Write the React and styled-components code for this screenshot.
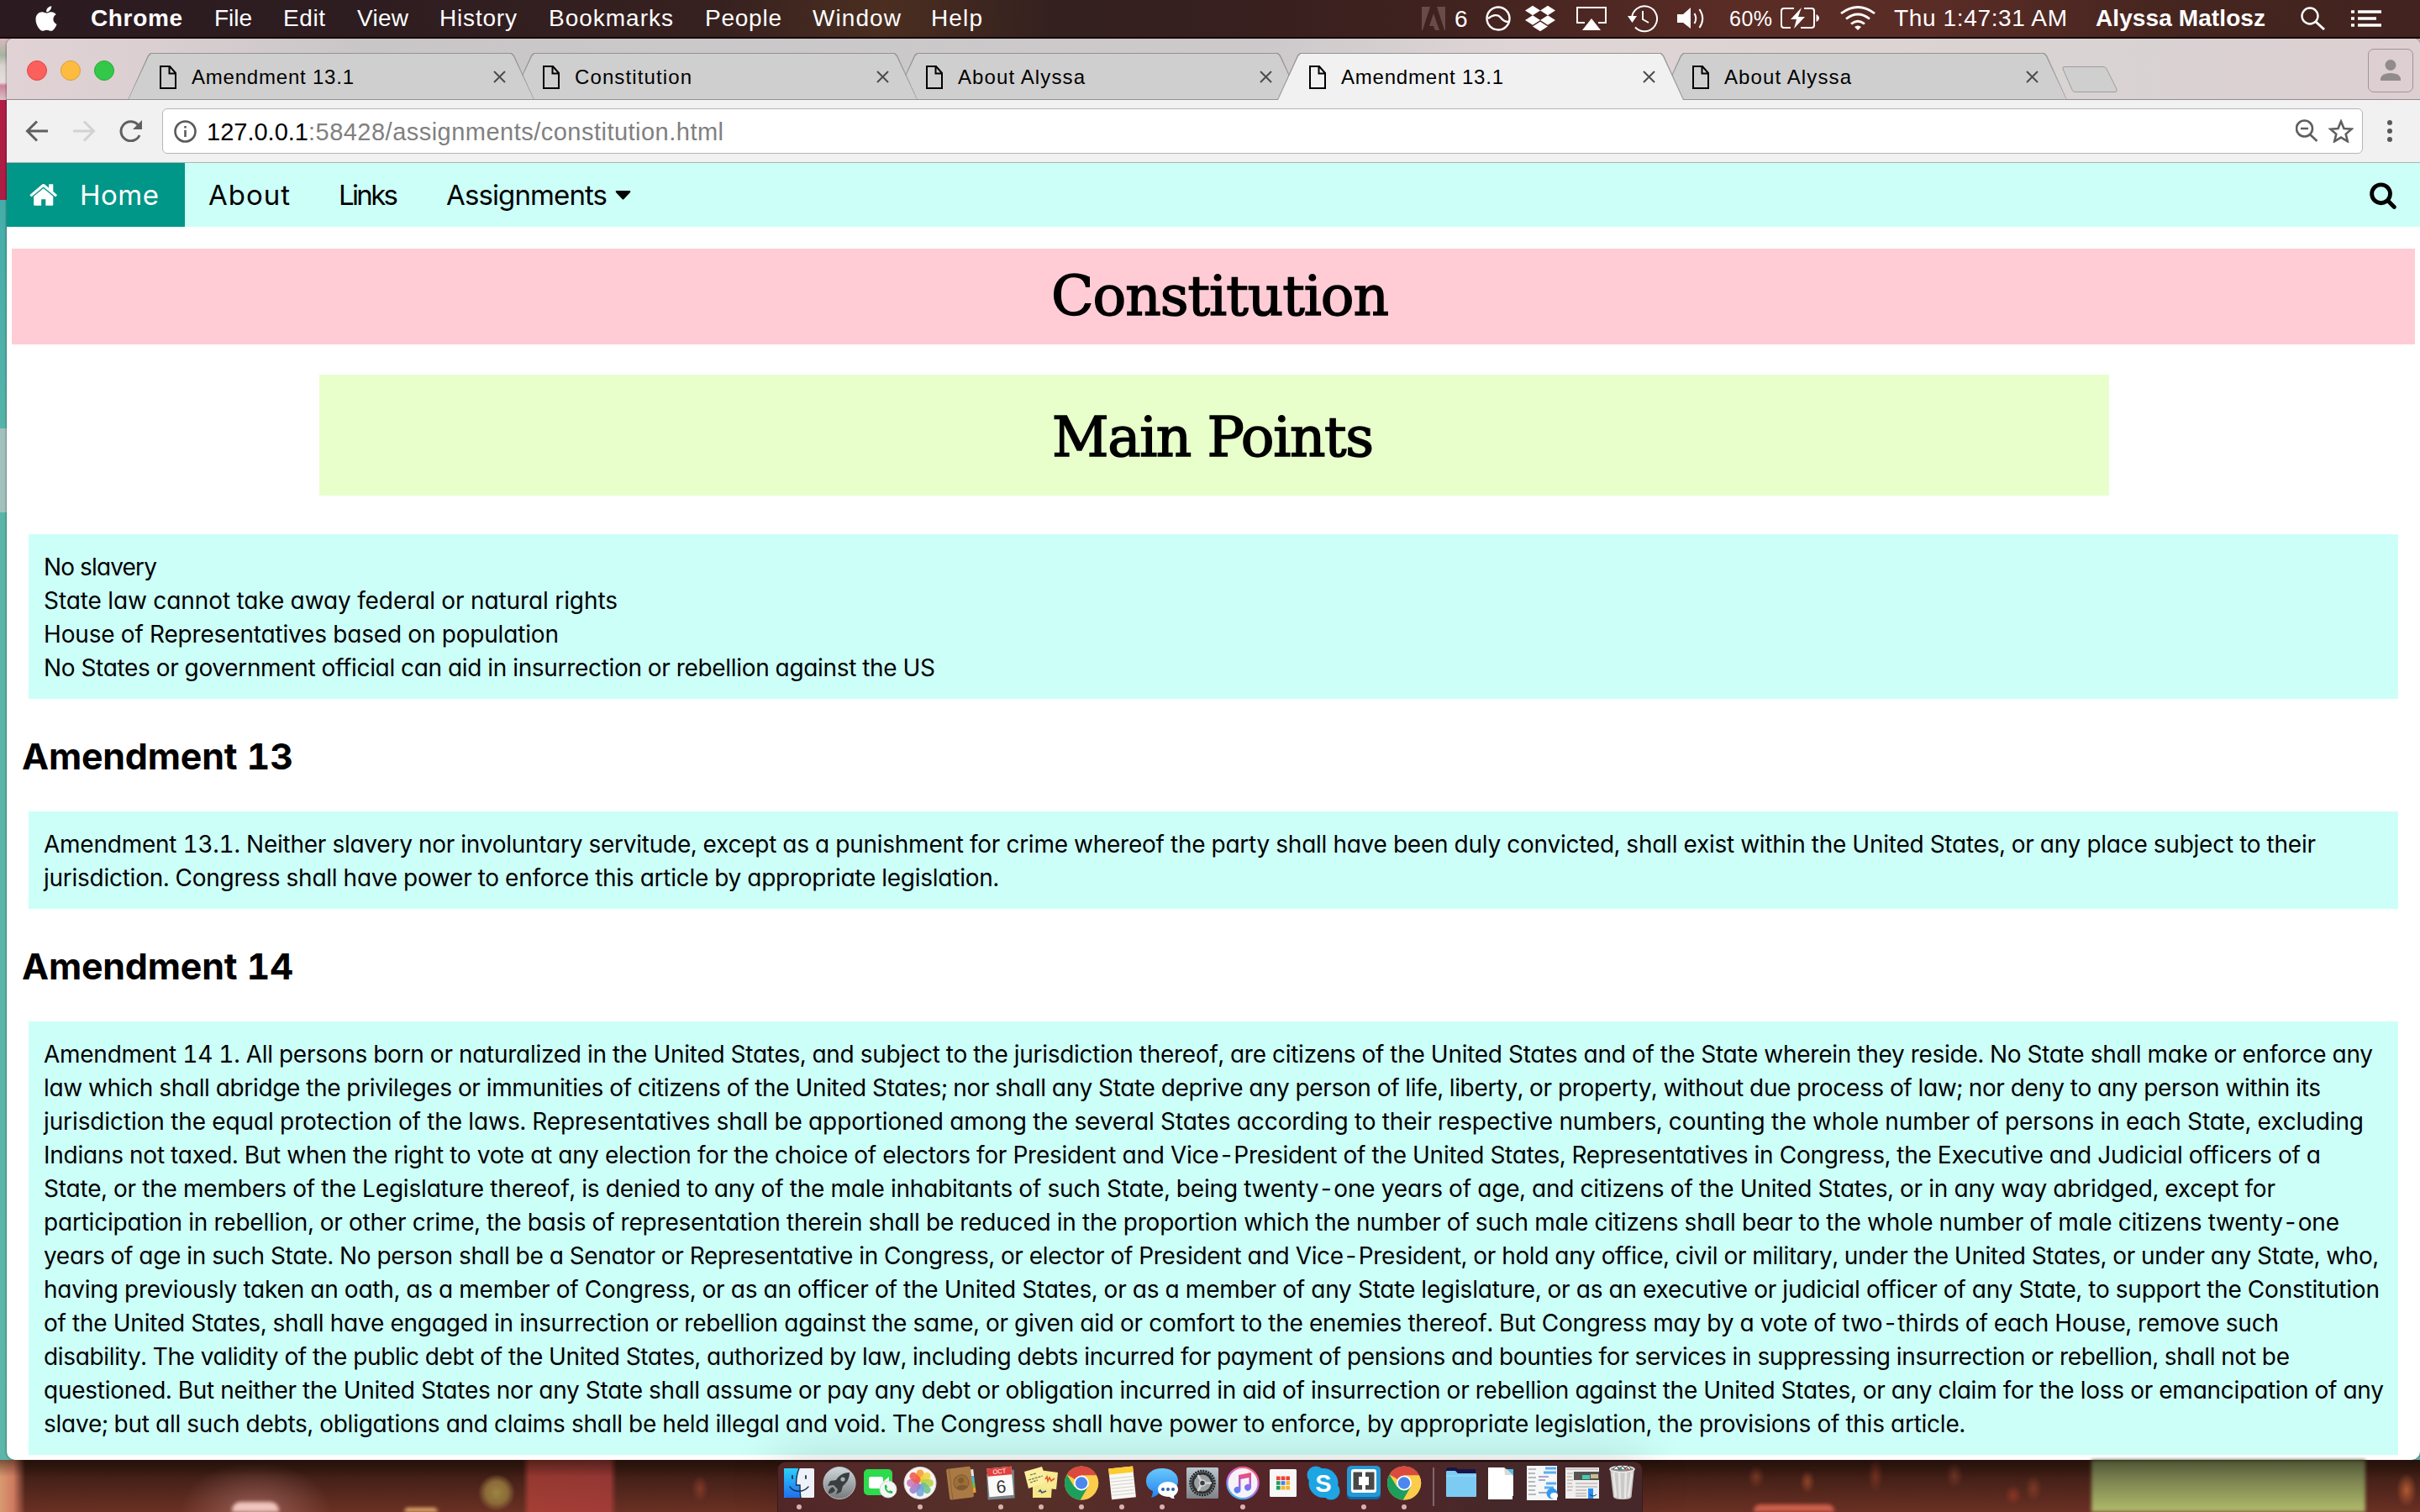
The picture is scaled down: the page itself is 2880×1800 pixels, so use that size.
import React, { useLayoutEffect, useRef, useState } from "react";
import styled, { createGlobalStyle } from "styled-components";
import { FaApple, FaDropbox } from "react-icons/fa";

const sans = `"Liberation Sans", Arial, sans-serif`;
const gothic = `Inter, "Open Sans", sans-serif`;
const slab = `"DejaVu Serif", serif`;

const GlobalStyle = createGlobalStyle`
  * { box-sizing: border-box; }
  body { margin: 0; background: #3a1d15; }
  svg { display: block; flex: none; }
`;

/* ---------- text set to a measured width ---------- */

const FitBox = styled.span`
  display: block;
  flex: none;
  width: ${(p) => p.$w}px;
  white-space: pre;
`;

function Fit({ w, children }) {
  const ref = useRef(null);
  const [spacing, setSpacing] = useState(0);
  useLayoutEffect(() => {
    const natural = ref.current.getBoundingClientRect().width;
    setSpacing((w - natural) / (children.length - 1 || 1));
  }, []);
  return (
    <FitBox $w={w}>
      <span ref={ref} style={{ letterSpacing: spacing }}>{children}</span>
    </FitBox>
  );
}

/* ---------- desktop ---------- */

const Desktop = styled.div`
  width: 2880px;
  height: 1800px;
  overflow: hidden;
  display: flex;
  flex-direction: column;
  background: #2a1512;
  font-family: ${sans};
`;

const MenuBar = styled.header`
  flex: none;
  height: 46px;
  padding: 0 46px 0 42px;
  display: flex;
  align-items: center;
  color: #fff;
  font-size: 28px;
  line-height: 32px;
  border-bottom: 2px solid #1a0a0a;
  background: linear-gradient(90deg, #2b1b20 0, #2d1c20 400px, #37211f 860px, #4b2e20 1050px,
    #33201f 1260px, #38201f 1500px, #40221f 1720px, #5a2c26 2060px, #5a2c26 2300px, #45251f 2600px, #42231f 2880px);
`;

const Menu = styled.div`
  display: flex;
  margin-left: ${(p) => p.$gap}px;
  font-weight: ${(p) => (p.$bold ? 700 : 400)};
  font-size: ${(p) => p.$size || 28}px;
  padding-top: ${(p) => p.$drop || 0}px;
`;

const StatusArea = styled.div`
  margin-left: auto;
  display: flex;
  align-items: center;
`;

const StatusIcon = styled.div`
  flex: none;
  width: ${(p) => p.$w}px;
  margin-left: ${(p) => p.$gap}px;
  display: flex;
  justify-content: center;
`;

const Workspace = styled.div`
  flex: none;
  height: 1692px;
  display: flex;
  background: linear-gradient(180deg, #d9b9bf 0, #a7b3a0 20px, #d8d4d2 32px, #e6dede 52px, #cf8298 56px, #d9c4c8 73px,
    #b01e45 73px, #ad1c44 192px, #45ada9 192px, #55b3a9 464px, #a3c1bc 464px, #a3c1bc 564px, #59b5a8 564px, #5cb6aa 100%);
`;

const Window = styled.main`
  margin-left: 8px;
  width: 2872px;
  display: flex;
  flex-direction: column;
  background: #fff;
  border-radius: 8px 8px 10px 10px;
  overflow: hidden;
  box-shadow: 0 0 3px rgba(0, 0, 0, 0.6);
`;

/* ---------- tab strip ---------- */

const TabStrip = styled.div`
  flex: none;
  height: 73px;
  padding: 17px 8px 0 36px;
  position: relative;
  display: flex;
  align-items: flex-start;
  background: linear-gradient(90deg, #e0d2d5 0, #ddd0d3 130px, #c9c6c7 420px, #cbc8c9 900px, #cdc9ca 1500px,
    #dfd5d6 1800px, #ddd3d2 2150px, #d9d3d3 2500px, #decfd1 2872px);
  box-shadow: inset 0 -1px 0 #908c8d;
`;

const Lights = styled.div`
  flex: none;
  display: flex;
  gap: 16px;
  width: 108px;
  padding-top: 9px;
  margin-left: -12px;
  margin-right: 12px;
`;

const Light = styled.span`
  width: 24px;
  height: 24px;
  border-radius: 50%;
  background: ${(p) => p.$fill};
  border: 1px solid ${(p) => p.$edge};
`;

const Tab = styled.div`
  flex: none;
  position: relative;
  z-index: ${(p) => p.$z};
  width: 484px;
  height: 56px;
  margin-right: -28px;
  padding: 1px 34px 0 38px;
  display: flex;
  align-items: center;
  font-size: 24px;
  color: #000;
  background: #949293;
  clip-path: polygon(0 100%, 24px 3px, 27px 0, calc(100% - 27px) 0, calc(100% - 24px) 3px, 100% 100%);
  &::before {
    content: "";
    position: absolute;
    z-index: -1;
    inset: 1px 1px ${(p) => (p.$active ? 0 : 1)}px 1px;
    background: ${(p) => (p.$active ? "#f1f1f1" : "#cfcfcf")};
    clip-path: polygon(0 100%, 24px 3px, 27px 0, calc(100% - 27px) 0, calc(100% - 24px) 3px, 100% 100%);
  }
  svg:last-child { margin-left: auto; }
`;

const TabTitle = styled.div`
  margin-left: 18px;
`;

const NewTab = styled.div`
  flex: none;
  width: 66px;
  height: 31px;
  margin: 16px 0 0 22px;
`;

const Profile = styled.div`
  flex: none;
  margin: -5px 0 0 auto;
  width: 54px;
  height: 52px;
  border: 1px solid #9c9596;
  border-radius: 7px;
  display: flex;
  align-items: center;
  justify-content: center;
`;

/* ---------- toolbar ---------- */

const Toolbar = styled.div`
  flex: none;
  height: 75px;
  padding: 0 29px 0 22px;
  display: flex;
  align-items: center;
  background: #f1f1f1;
  border-bottom: 1px solid #b3b3b3;
`;

const NavButtons = styled.div`
  flex: none;
  width: 163px;
  display: flex;
  gap: 28px;
`;

const Omnibox = styled.div`
  width: 2619px;
  height: 54px;
  margin-right: 28px;
  padding: 0 10px 0 13px;
  display: flex;
  align-items: center;
  background: #fff;
  border: 1px solid #b5b5b5;
  border-radius: 6px;
  font-size: 29px;
`;

const Url = styled.div`
  margin: 2px auto 0 12px;
  display: flex;
  color: ${(p) => p.$color};
`;

const UrlPath = styled.div`
  color: #808080;
`;

/* ---------- page ---------- */

const NavBar = styled.nav`
  flex: none;
  height: 76px;
  padding-right: 27px;
  display: flex;
  align-items: center;
  justify-content: space-between;
  background: #ccfff8;
  font-family: ${gothic};
  font-feature-settings: "cv11", "ss03";
  font-size: 33px;
`;

const NavLinks = styled.div`
  height: 100%;
  display: flex;
`;

const NavLink = styled.a`
  height: 100%;
  display: flex;
  align-items: center;
  padding: 0 ${(p) => p.$right}px 0 ${(p) => p.$left}px;
  gap: ${(p) => p.$gap || 0}px;
  color: ${(p) => (p.$active ? "#fff" : "#000")};
  background: ${(p) => (p.$active ? "#009688" : "transparent")};
`;

const Banner = styled.h1`
  flex: none;
  margin: ${(p) => p.$margin};
  width: ${(p) => p.$w}px;
  height: ${(p) => p.$h}px;
  padding: ${(p) => p.$drop}px 0 0 ${(p) => p.$indent}px;
  display: flex;
  align-items: center;
  background: ${(p) => p.$fill};
  font: 400 66px/80px ${slab};
  -webkit-text-stroke: 1.6px #000;
`;

const Panel = styled.section`
  flex: none;
  margin: 0 26px;
  padding: 19px 17px 17px 18px;
  background: #ccfff8;
  font: 400 28px/40px ${gothic};
  font-feature-settings: "cv11", "ss03", "tnum";
`;

const Heading = styled.h2`
  flex: none;
  height: 134px;
  margin: 0;
  padding: 2px 0 0 18px;
  display: flex;
  align-items: center;
  font: 700 43px/50px ${gothic};
  font-feature-settings: "cv11", "ss03", "tnum";
`;

/* ---------- dock ---------- */

const DockArea = styled.footer`
  flex: none;
  position: relative;
  height: 62px;
  padding: 2px 0 0 925px;
  background:
    linear-gradient(180deg, rgba(30, 14, 8, 0.5) 0, transparent 20px),
    linear-gradient(90deg, #d89a70 0, #cf7a60 16px, transparent 30px),
    radial-gradient(90px 60px at 304px 62px, rgba(190, 130, 125, 0.55), transparent),
    radial-gradient(22px 22px at 591px 39px, #9a8442 0, #8b6a38 60%, transparent 100%),
    linear-gradient(90deg, transparent 622px, rgba(200, 72, 64, 0.62) 630px, rgba(190, 66, 66, 0.66) 726px, transparent 734px),
    radial-gradient(10px 16px at 833px 34px, rgba(160, 70, 50, 0.6), transparent),
    radial-gradient(10px 14px at 2090px 20px, rgba(150, 70, 45, 0.6), transparent),
    radial-gradient(9px 14px at 2151px 26px, rgba(170, 80, 45, 0.7), transparent),
    radial-gradient(9px 22px at 2232px 18px, rgba(150, 60, 40, 0.6), transparent),
    radial-gradient(10px 16px at 2326px 18px, rgba(140, 65, 50, 0.6), transparent),
    radial-gradient(10px 16px at 2420px 34px, rgba(150, 70, 45, 0.6), transparent),
    radial-gradient(10px 12px at 2396px 42px, rgba(170, 60, 40, 0.6), transparent),
    radial-gradient(12px 20px at 2864px 36px, rgba(200, 100, 55, 0.8), transparent),
    linear-gradient(180deg, #2b140d 0, #4b231a 45%, #6b3024 100%);
`;

const Glow = styled.div`
  position: absolute;
  left: ${(p) => p.$x}px;
  bottom: 0;
  width: ${(p) => p.$w}px;
  height: ${(p) => p.$h}px;
  border-radius: ${(p) => p.$round || 0}px ${(p) => p.$round || 0}px 0 0;
  background: ${(p) => p.$fill};
  filter: blur(2px);
`;

const Dock = styled.div`
  position: relative;
  width: 1030px;
  height: 64px;
  padding-left: 1px;
  display: flex;
  border-radius: 10px 10px 0 0;
  border: 1px solid #38191a;
  background: linear-gradient(90deg, #512628 0, #573129 270px, #542629 520px, #542629 700px, #452829 860px, #47282a 1030px);
  box-shadow: 0 -4px 60px rgba(0, 0, 0, 0.16);
`;

const DockItem = styled.div`
  flex: none;
  width: 48px;
  height: 60px;
  display: flex;
  flex-direction: column;
  align-items: center;
  &::after {
    content: "";
    width: 6px;
    height: 6px;
    border-radius: 50%;
    background: ${(p) => (p.$running ? "#d9b0b0" : "transparent")};
  }
`;

const DockDivider = styled.div`
  flex: none;
  width: 2px;
  height: 46px;
  margin: 6px 8px 0 10px;
  background: #83666a;
`;

/* ---------- small drawings ---------- */

const PageIcon = () => (
  <svg width="20" height="28" viewBox="0 0 20 28" fill="none" stroke="#000" strokeWidth="2">
    <path d="M1 1H12L19 9V27H1Z M11.5 1V9.5H19" />
  </svg>
);
const CloseIcon = () => (
  <svg width="15" height="15" viewBox="0 0 15 15" stroke="#4c4c4c" strokeWidth="2">
    <path d="M1 1L14 14M14 1L1 14" />
  </svg>
);

/* ---------- dock drawings, each in a 48 x 50 cell ---------- */

const Cell = ({ children }) => <svg width="48" height="50" viewBox="0 0 48 50">{children}</svg>;

const Finder = () => (
  <Cell>
    <defs><linearGradient id="fin" x2="0" y2="1"><stop stopColor="#2bd0fb" /><stop offset="1" stopColor="#1f6ff0" /></linearGradient></defs>
    <rect x="6" y="7" width="36" height="35" rx="1.5" fill="#eef2f8" />
    <path d="M7.500 7H24C21 14 20.500 20 20.500 27H25C25 33 25 37 26 42H7.500Q6 42 6 40.500V8.500Q6 7 7.500 7Z" fill="url(#fin)" />
    <path d="M24 7C21 14 20.500 20 20.500 27H25C25 33 25 37 26 42M13 29C18 36 29 36 35 29" fill="none" stroke="#16324f" strokeWidth="1.4" strokeLinecap="round" />
    <path d="M16 16V19M32 16V19" stroke="#16324f" strokeWidth="1.8" strokeLinecap="round" />
  </Cell>
);
const Rocket = () => (
  <Cell>
    <defs><linearGradient id="rk" x2="0" y2="1"><stop stopColor="#cfd8dc" /><stop offset="1" stopColor="#76797b" /></linearGradient></defs>
    <circle cx="24" cy="24.500" r="19" fill="url(#rk)" stroke="#bcc4c8" />
    <path d="M36 12C28 12 23 16 20 21L13 22L10 28L17 27L22 32L20 38L26 35L28 28C33 24 36 19 36 12Z" fill="#3b3e41" />
    <circle cx="28" cy="20" r="2.600" fill="#a7afb3" />
    <path d="M16 29C12 31 11 34 11 37C14 37 17 36 19 33Z" fill="#3b3e41" />
  </Cell>
);
const FaceTime = () => (
  <Cell>
    <rect x="5" y="8" width="34" height="31" rx="5" fill="#2ddb4c" />
    <rect x="11" y="17" width="17" height="14" rx="2.500" fill="#fff" />
    <path d="M28 23L35 17V31L28 26Z" fill="#fff" />
    <circle cx="34" cy="32" r="10" fill="#f4f5f5" stroke="#cfd6d2" />
    <path d="M30 27C29 33 33 37 39 37L39.500 34.500L36.500 33.300L35 34.300C33.500 33.500 32.500 32.500 32 31L33 29.500L31.800 26.600Z" fill="#22bf4a" />
  </Cell>
);
const Photos = () => (
  <Cell>
    <circle cx="24" cy="24.500" r="19" fill="#f6f4f3" stroke="#d6cfcc" />
    {["#f79a2f", "#f1d43a", "#b5d14c", "#6cc08b", "#6fa7dd", "#9a82cf", "#c978b8", "#ef5a4c"].map((c, i) => (
      <rect key={c} x="19.500" y="8.500" width="9" height="15" rx="4.500" fill={c} opacity="0.88" transform={`rotate(${i * 45} 24 24.500)`} />
    ))}
  </Cell>
);
const Contacts = () => (
  <Cell>
    <g transform="rotate(-7 24 24)">
      <path d="M36 10H41V18H36Z" fill="#e8e8e8" /><path d="M36 18H41V25H36Z" fill="#4ab6d6" />
      <path d="M36 25H41V32H36Z" fill="#6cbf4a" /><path d="M36 32H41V38H36Z" fill="#f0a12e" />
      <rect x="9" y="6" width="29" height="37" rx="2" fill="#a97a45" />
      <path d="M12.500 6V43" stroke="#8c6232" />
      <circle cx="25" cy="24" r="9" fill="#9d6f3b" stroke="#80592c" />
      <circle cx="25" cy="21.500" r="3.500" fill="#80592c" /><path d="M18.500 30C20 26 30 26 31.500 30C28 33 22 33 18.500 30Z" fill="#80592c" />
    </g>
  </Cell>
);
const DayLabel = styled.text`
  font-family: ${sans};
  text-anchor: middle;
`;
const Calendar = () => (
  <Cell>
    <g transform="rotate(-5 24 24)">
      <path d="M8 12L7 43L39 44L41 10Z" fill="#77828c" />
      <rect x="9" y="6" width="29" height="34" fill="#fafafa" />
      <rect x="9" y="6" width="29" height="9.500" fill="#e2403c" />
      <DayLabel x="23.500" y="13.300" fontSize="7.500" fill="#fff">OCT</DayLabel>
      <DayLabel x="24" y="36" fontSize="21" fill="#333">6</DayLabel>
    </g>
  </Cell>
);
const Stickies = () => (
  <Cell>
    <path d="M14 24L37 26L36 42L14 42Z" fill="#f5e688" />
    <path d="M22 9L44 12L42 32L22 30Z" fill="#f7ea90" />
    <path d="M4 11L25 5L31 23L9 31Z" fill="#fbf0a0" />
    <path d="M11 15L18 13M9 21L26 16M11 24L20 21" stroke="#77704a" strokeWidth="1.3" strokeDasharray="3 1" />
    <path d="M29 20L31 17L32 22L34 18L36 22L40 19" stroke="#e2552f" strokeWidth="1.6" fill="none" />
    <path d="M21 35L23 33L25 36L30 34" stroke="#34507c" strokeWidth="1.6" fill="none" />
  </Cell>
);
const ChromeLogo = () => (
  <Cell>
    <circle cx="24" cy="24.500" r="20" fill="#fbcd4b" />
    <path d="M24 24.500L6.700 14.500A20 20 0 0 1 42 15.500H24Z" fill="#db4a3f" />
    <path d="M6.700 14.500A20 20 0 0 0 23 44.500L32 29L24 24.500L15.500 29Z" fill="#1c9f5c" />
    <path d="M24 15.500H42A20 20 0 0 1 23 44.500L32 29Z" fill="#fbcd4b" />
    <circle cx="24" cy="24.500" r="9" fill="#fff" /><circle cx="24" cy="24.500" r="7.200" fill="#4c87ee" />
  </Cell>
);
const Notes = () => (
  <Cell>
    <g transform="rotate(-6 24 24)">
      <rect x="10" y="6" width="29" height="37" fill="#f9f8f4" /><rect x="10" y="6" width="29" height="7" fill="#fccb2f" />
      <path d="M11 18H38M11 22H38M11 26H38M11 30H38M11 34H38M11 38H38" stroke="#d4d2cb" />
    </g>
  </Cell>
);
const Messages = () => (
  <Cell>
    <defs><linearGradient id="ms" x2="0" y2="1"><stop stopColor="#6bc8fb" /><stop offset="1" stopColor="#2084ef" /></linearGradient></defs>
    <path d="M24 7C13 7 5 13 5 22C5 28 8 32 13 34C13 37 12 40 11 42C15 41 18 39 20 37C34 38 43 32 43 22C43 13 35 7 24 7Z" fill="url(#ms)" />
    <path d="M31 23C24 23 19 27 19 32C19 38 25 41 33 41C35 43 37 43 39 43C38 42 38 41 38 40C41 38 43 35 43 32C43 27 38 23 31 23Z" fill="#fff" />
    <g fill="#2b5fae"><circle cx="25" cy="32" r="2" /><circle cx="31" cy="32" r="2" /><circle cx="37" cy="32" r="2" /></g>
  </Cell>
);
const Settings = () => (
  <Cell>
    <defs><linearGradient id="st" x2="0" y2="1"><stop stopColor="#b9c7cf" /><stop offset="1" stopColor="#7d8488" /></linearGradient></defs>
    <rect x="5" y="6" width="38" height="37" rx="1.500" fill="url(#st)" />
    <circle cx="24" cy="24.500" r="14.500" fill="#8f9496" stroke="#242628" strokeWidth="2.500" strokeDasharray="2 1.100" />
    <circle cx="24" cy="24.500" r="11.500" fill="#9b9fa1" stroke="#2f3133" strokeWidth="3" />
    <path d="M24 24.500H35M24 24.500L18.500 15M24 24.500L18.500 34" stroke="#d3d6d8" strokeWidth="2.600" />
    <circle cx="24" cy="24.500" r="3.500" fill="#3a3c3e" stroke="#d3d6d8" strokeWidth="1.500" />
  </Cell>
);
const ITunes = () => (
  <Cell>
    <defs>
      <linearGradient id="itr" x1="0.800" x2="0.300" y2="1"><stop stopColor="#fa5a6c" /><stop offset="0.500" stopColor="#c769e6" /><stop offset="1" stopColor="#3fb4f7" /></linearGradient>
      <linearGradient id="itn" x2="0" y2="1"><stop stopColor="#fb4b63" /><stop offset="0.550" stopColor="#a95fe6" /><stop offset="1" stopColor="#3d8bf4" /></linearGradient>
    </defs>
    <circle cx="24" cy="24.500" r="18.600" fill="#f5f3f9" stroke="url(#itr)" strokeWidth="2.200" />
    <path d="M19 15L34 12V29.500A4 4 0 1 1 31.500 26V18L21.500 20V32.500A4 4 0 1 1 19 29Z" fill="url(#itn)" />
  </Cell>
);
const AppGrid = () => (
  <Cell>
    <rect x="8" y="8" width="32" height="33" rx="1.500" fill="#f7f7f7" />
    {["#ee4035", "#ee4035", "#ee4035", "#17a05e", "#3d7ff0", "#f7b529", "#17a05e", "#f7b529", "#f7b529"].map((c, i) => (
      <rect key={i} x={16 + (i % 3) * 5.700} y={16.500 + Math.floor(i / 3) * 5.700} width="4.600" height="4.600" fill={c} />
    ))}
  </Cell>
);
const SkypeLetter = styled.text`
  font: 700 29px ${sans};
  text-anchor: middle;
`;
const Skype = () => (
  <Cell>
    <g fill="#1ea5e3"><circle cx="24" cy="24.500" r="17.500" /><circle cx="15" cy="15" r="10.500" /><circle cx="33" cy="34" r="10.500" /></g>
    <SkypeLetter x="24" y="35" fill="#fff">S</SkypeLetter>
  </Cell>
);
const Brackets = () => (
  <Cell>
    <rect x="4" y="5" width="40" height="39" rx="5" fill="#0d68a8" /><rect x="4" y="4" width="40" height="37" rx="5" fill="#2398d4" />
    <rect x="9" y="8" width="30" height="28" rx="3" fill="#fff" />
    <path d="M11.500 11.500H22V17H18V27H22V32.500H11.500ZM36.500 11.500H26V17H30V27H26V32.500H36.500Z" fill="#484848" />
  </Cell>
);
const Folder = () => (
  <Cell>
    <path d="M6 8L8 6H18L20 8H41V16H6Z" fill="#171447" />
    <path d="M6 11Q6 10 7 10H17L20 13H41Q42 13 42 14V40Q42 41 41 41H7Q6 41 6 40Z" fill="#7ccbf3" />
    <path d="M6 16H42" stroke="#a2ddf8" />
  </Cell>
);
const Documents = () => (
  <Cell>
    <path d="M20 8H38V40H20Z" fill="#e8ecee" /><path d="M30 8H38V16Z" fill="#54bde6" />
    <path d="M8 6H27L37 15V44H8Z" fill="#fff" /><path d="M27 6L28 15H37Z" fill="#d8dada" />
  </Cell>
);
const MessageWindow = () => (
  <Cell>
    <rect x="6" y="4" width="36" height="41" fill="#f6f7f7" />
    <path d="M8 8H17M8 13H16M8 18H17M8 23H16M8 28H17M8 33H16M8 38H17" stroke="#a4a7a9" strokeWidth="1.600" />
    <path d="M28 7H41M26 12H41M29 25H41M27 30H38" stroke="#58adf3" strokeWidth="3" />
    <path d="M20 17H32M20 21H28M20 36H30" stroke="#8b8bc9" strokeWidth="1.600" />
    <circle cx="36" cy="37" r="6.500" fill="#2f9af3" /><ellipse cx="38.500" cy="39.500" rx="4.500" ry="3.500" fill="#fff" />
  </Cell>
);
const FinderWindow = () => (
  <Cell>
    <rect x="4" y="6" width="40" height="37" fill="#f1efee" />
    <path d="M5 8H43M6 13H13M6 17H12M6 21H13M6 25H12M6 29H13M6 33H12" stroke="#c3bdb8" strokeWidth="1.500" />
    <rect x="14" y="11" width="30" height="10" fill="#565452" /><rect x="24" y="15" width="9" height="5" fill="#43cbb5" /><rect x="34" y="14" width="9" height="5" fill="#cbbd92" />
    <path d="M16 25H42M16 29H42M16 33H29M16 37H29M16 40H29" stroke="#bcbcbc" strokeWidth="1.300" />
    <rect x="31" y="31" width="12" height="12" fill="#eaf1f8" /><rect x="31" y="31" width="6" height="12" fill="#2491f3" />
    <path d="M33 38Q37 42 41 38" fill="none" stroke="#1d3550" />
  </Cell>
);
const Trash = () => (
  <Cell>
    <path d="M9 7L38 7L34.500 41Q34 44 24 44Q14 44 13 41Z" fill="#cccac8" />
    <path d="M13 12L16 41M20 12L21 43M28 12L27 43M35 12L31 41" stroke="#e8e7e6" strokeWidth="2.500" />
    <ellipse cx="23.500" cy="8" rx="14.500" ry="3.600" fill="#8d8b89" stroke="#eeedec" strokeWidth="1.500" />
    <path d="M13 8L17 4L20 9L24 4L27 8L31 4L34 8" fill="#f4f4f4" stroke="#4a4644" strokeWidth="1" />
    <circle cx="22" cy="8" r="1.500" fill="#2e9a8c" /><circle cx="30" cy="8" r="1.300" fill="#b94a3a" />
  </Cell>
);

/* ---------- data ---------- */

const menus = [
  ["Chrome", 109, 41, true], ["File", 45, 38], ["Edit", 50, 37], ["View", 61, 38], ["History", 92, 37],
  ["Bookmarks", 148, 38], ["People", 91, 38], ["Window", 105, 37], ["Help", 61, 36],
];

const tabs = [
  ["Amendment 13.1", 193], ["Constitution", 139], ["About Alyssa", 151], ["Amendment 13.1", 193], ["About Alyssa", 151],
];

const points = [
  ["No slavery", 135],
  ["State law cannot take away federal or natural rights", 683],
  ["House of Representatives based on population", 613],
  ["No States or government official can aid in insurrection or rebellion against the US", 1061],
];

const amendment13 = [
  ["Amendment 13.1. Neither slavery nor involuntary servitude, except as a punishment for crime whereof the party shall have been duly convicted, shall exist within the United States, or any place subject to their", 2704],
  ["jurisdiction. Congress shall have power to enforce this article by appropriate legislation.", 1137],
];

const amendment14 = [
  ["Amendment 14 1. All persons born or naturalized in the United States, and subject to the jurisdiction thereof, are citizens of the United States and of the State wherein they reside. No State shall make or enforce any", 2772],
  ["law which shall abridge the privileges or immunities of citizens of the United States; nor shall any State deprive any person of life, liberty, or property, without due process of law; nor deny to any person within its", 2710],
  ["jurisdiction the equal protection of the laws. Representatives shall be apportioned among the several States according to their respective numbers, counting the whole number of persons in each State, excluding", 2761],
  ["Indians not taxed. But when the right to vote at any election for the choice of electors for President and Vice-President of the United States, Representatives in Congress, the Executive and Judicial officers of a", 2710],
  ["State, or the members of the Legislature thereof, is denied to any of the male inhabitants of such State, being twenty-one years of age, and citizens of the United States, or in any way abridged, except for", 2656],
  ["participation in rebellion, or other crime, the basis of representation therein shall be reduced in the proportion which the number of such male citizens shall bear to the whole number of male citizens twenty-one", 2732],
  ["years of age in such State. No person shall be a Senator or Representative in Congress, or elector of President and Vice-President, or hold any office, civil or military, under the United States, or under any State, who,", 2779],
  ["having previously taken an oath, as a member of Congress, or as an officer of the United States, or as a member of any State legislature, or as an executive or judicial officer of any State, to support the Constitution", 2780],
  ["of the United States, shall have engaged in insurrection or rebellion against the same, or given aid or comfort to the enemies thereof. But Congress may by a vote of two-thirds of each House, remove such", 2660],
  ["disability. The validity of the public debt of the United States, authorized by law, including debts incurred for payment of pensions and bounties for services in suppressing insurrection or rebellion, shall not be", 2673],
  ["questioned. But neither the United States nor any State shall assume or pay any debt or obligation incurred in aid of insurrection or rebellion against the United States, or any claim for the loss or emancipation of any", 2785],
  ["slave; but all such debts, obligations and claims shall be held illegal and void. The Congress shall have power to enforce, by appropriate legislation, the provisions of this article.", 2287],
];

const apps = [
  [Finder, true], [Rocket], [FaceTime], [Photos, true], [Contacts], [Calendar, true], [Stickies, true], [ChromeLogo, true],
  [Notes, true], [Messages, true], [Settings], [ITunes, true], [AppGrid], [Skype], [Brackets, true], [ChromeLogo, true],
];
const shelf = [Folder, Documents, MessageWindow, FinderWindow, Trash];

const Lines = ({ rows }) => (
  <Panel>{rows.map(([t, w]) => <Fit key={t} w={w}>{t}</Fit>)}</Panel>
);

function Status() {
  return (
    <StatusArea>
      <StatusIcon $w={28} $gap={0}>
        <svg width="28" height="28" viewBox="0 0 28 28" fill="#674c4a"><path d="M0 0H10L1 28H0ZM18 0H28V28H27ZM14 8L21 28H16L14 23H9Z" /></svg>
      </StatusIcon>
      <Menu $gap={11} $drop={2}><Fit w={15}>6</Fit></Menu>
      <StatusIcon $w={30} $gap={22}>
        <svg width="30" height="30" viewBox="0 0 30 30" fill="none" stroke="#fff" strokeWidth="2.400"><circle cx="15" cy="15" r="13.500" /><path d="M3 15C9 10 15 10 18 14S24 19 27 19" /></svg>
      </StatusIcon>
      <StatusIcon $w={34} $gap={18}><FaDropbox size={36} /></StatusIcon>
      <StatusIcon $w={36} $gap={26}>
        <svg width="36" height="28" viewBox="0 0 36 28"><path d="M10 19H1V1H35V19H26" fill="none" stroke="#fff" strokeWidth="2" /><path d="M18 14L29 28H7Z" fill="#fff" /></svg>
      </StatusIcon>
      <StatusIcon $w={36} $gap={25}>
        <svg width="36" height="33" viewBox="0 0 36 33" fill="none" stroke="#fff" strokeWidth="2"><path d="M5 16A15 15 0 1 1 9 26.500M18 7V17L25 21" /><path d="M0 13H11L5.500 21Z" fill="#fff" stroke="none" /></svg>
      </StatusIcon>
      <StatusIcon $w={33} $gap={23}>
        <svg width="33" height="26" viewBox="0 0 33 26"><path d="M0 8H7L16 0V25L7 18H0Z" fill="#fff" /><path d="M20.500 7Q24 13 20.500 19M26.500 2Q34 13 26.500 24" fill="none" stroke="#fff" strokeWidth="2" /></svg>
      </StatusIcon>
      <Menu $gap={29} $size={25}><Fit w={51}>60%</Fit></Menu>
      <StatusIcon $w={46} $gap={10}>
        <svg width="46" height="26" viewBox="0 0 46 26"><path d="M16 1H4Q1 1 1 4V21Q1 24 4 24H12M28 1H37Q40 1 40 4V21Q40 24 37 24H24" fill="none" stroke="#fff" strokeWidth="2" /><path d="M25 0L12 14H19L16 25L29 11H21ZM42.500 8Q46 10 46 12.500T42.500 17Z" fill="#fff" /></svg>
      </StatusIcon>
      <StatusIcon $w={42} $gap={25}>
        <svg width="42" height="30" viewBox="0 0 42 30" fill="none" stroke="#fff" strokeWidth="2.800"><path d="M1 9Q21 -6 41 9M7 15.500Q21 4.500 35 15.500M13 21.500Q21 15 29 21.500" /><path d="M17 25Q21 22 25 25L21 29Z" fill="#fff" stroke="none" /></svg>
      </StatusIcon>
      <Menu $gap={22}><Fit w={206}>Thu 1:47:31 AM</Fit></Menu>
      <Menu $gap={34} $bold><Fit w={202}>Alyssa Matlosz</Fit></Menu>
      <StatusIcon $w={29} $gap={42}>
        <svg width="29" height="28" viewBox="0 0 29 28" fill="none" stroke="#fff" strokeWidth="2.400"><circle cx="11" cy="11" r="9.500" /><path d="M18 18L28 27" strokeWidth="3" /></svg>
      </StatusIcon>
      <StatusIcon $w={36} $gap={31}>
        <svg width="36" height="20" viewBox="0 0 36 20" stroke="#fff" strokeWidth="3.600"><path d="M0 2H4M0 10H4M0 18H4M8 2H36M8 10H30M8 18H36" /></svg>
      </StatusIcon>
    </StatusArea>
  );
}

export default function App() {
  return (
    <Desktop>
      <GlobalStyle />
      <MenuBar>
        <StatusIcon $w={25} $gap={0}><FaApple size={34} /></StatusIcon>
        {menus.map(([t, w, gap, bold]) => (
          <Menu key={t} $gap={gap} $bold={bold}><Fit w={w}>{t}</Fit></Menu>
        ))}
        <Status />
      </MenuBar>

      <Workspace>
        <Window>
          <TabStrip>
            <Lights>
              <Light $fill="#fc605c" $edge="#df4744" />
              <Light $fill="#fdbc40" $edge="#de9f34" />
              <Light $fill="#34c84a" $edge="#27aa35" />
            </Lights>
            {tabs.map(([t, w], i) => (
              <Tab key={i} $active={i === 3} $z={i === 3 ? 10 : 6 - i}>
                <PageIcon />
                <TabTitle><Fit w={w}>{t}</Fit></TabTitle>
                <CloseIcon />
              </Tab>
            ))}
            <NewTab>
              <svg width="66" height="31" viewBox="0 0 66 31"><path d="M3 0.500H49Q52 0.500 53 3L65 27Q66 30.500 63 30.500H16Q13 30.500 12 28L1 3Q0 0.500 3 0.500Z" fill="#cfcfcf" stroke="#a09a9b" /></svg>
            </NewTab>
            <Profile>
              <svg width="24" height="26" viewBox="0 0 24 26" fill="#918b8c"><circle cx="12" cy="6.500" r="6.500" /><path d="M0 25V22Q2 16 12 16T24 22V25Z" /></svg>
            </Profile>
          </TabStrip>

          <Toolbar>
            <NavButtons>
              <svg width="28" height="26" viewBox="0 0 28 26" fill="none" stroke="#5f5f5f" strokeWidth="3"><path d="M27 13H3M14 1.500L2.500 13L14 24.500" /></svg>
              <svg width="28" height="26" viewBox="0 0 28 26" fill="none" stroke="#d2d2d2" strokeWidth="3"><path d="M1 13H25M14 1.500L25.500 13L14 24.500" /></svg>
              <svg width="28" height="26" viewBox="0 0 28 26"><path d="M24 18A11.500 11.500 0 1 1 22 5.500" fill="none" stroke="#5f5f5f" strokeWidth="3" /><path d="M27 0V11H16Z" fill="#5f5f5f" /></svg>
            </NavButtons>
            <Omnibox>
              <svg width="27" height="27" viewBox="0 0 27 27" fill="none" stroke="#5a5a5a" strokeWidth="2.600"><circle cx="13.500" cy="13.500" r="12" /><path d="M13.500 12V20M13.500 7V9.600" /></svg>
              <Url $color="#000">
                <Fit w={121}>127.0.0.1</Fit>
                <UrlPath><Fit w={494}>:58428/assignments/constitution.html</Fit></UrlPath>
              </Url>
              <svg width="69" height="28" viewBox="0 0 69 28" fill="none" stroke="#5f5f5f" strokeWidth="2.600">
                <circle cx="10.500" cy="11" r="9.500" /><path d="M6 11H15M17 18L25.500 26" />
                <path d="M54 2.500L57.500 11L66.500 11.700L59.700 17.600L61.800 26.300L54 21.600L46.200 26.300L48.300 17.600L41.500 11.700L50.500 11Z" />
              </svg>
            </Omnibox>
            <svg width="8" height="26" viewBox="0 0 8 26" fill="#5a5a5a"><circle cx="4" cy="3" r="3" /><circle cx="4" cy="13" r="3" /><circle cx="4" cy="23" r="3" /></svg>
          </Toolbar>

          <NavBar>
            <NavLinks>
              <NavLink $active $left={27} $right={31} $gap={24}>
                <svg width="36" height="36" viewBox="0 0 1792 1792" fill="#fff"><path d="M1408 992v480q0 26-19 45t-45 19h-384v-384h-256v384h-384q-26 0-45-19t-19-45v-480q0-1 .5-3t.5-3l575-474 575 474q1 2 1 6zm223-69l-62 74q-8 9-21 11h-3q-13 0-21-7l-692-577-692 577q-12 8-24 7-13-2-21-11l-62-74q-8-10-7-23.500t11-21.500l719-599q32-26 76-26t76 26l244 204v-195q0-14 9-23t23-9h192q14 0 23 9t9 23v408l219 182q10 8 11 21.500t-7 23.500z" /></svg>
                <Fit w={94}>Home</Fit>
              </NavLink>
              <NavLink $left={28} $right={30}><Fit w={97}>About</Fit></NavLink>
              <NavLink $left={28} $right={29}><Fit w={71}>Links</Fit></NavLink>
              <NavLink $left={28} $right={30} $gap={9}>
                <Fit w={192}>Assignments</Fit>
                <svg width="19" height="11" viewBox="0 0 19 11"><path d="M1.500 0H17.500Q19 0.500 18 2L10.500 10Q9.500 11 8.500 10L1 2Q0 0.500 1.500 0Z" /></svg>
              </NavLink>
            </NavLinks>
            <svg width="34" height="34" viewBox="0 0 1792 1792"><path d="M1216 832q0-185-131.500-316.500t-316.500-131.500-316.500 131.500-131.500 316.500 131.500 316.500 316.500 131.500 316.500-131.500 131.500-316.500zm512 832q0 52-38 90t-90 38q-54 0-90-38l-343-342q-179 124-399 124-143 0-273.500-55.500t-225-150-150-225-55.500-273.500 55.500-273.500 150-225 225-150 273.500-55.500 273.500 55.500 225 150 150 225 55.500 273.500q0 220-124 399l343 343q37 37 37 90z" /></svg>
          </NavBar>

          <Banner $margin="26px 0 0 6px" $w={2860} $h={114} $drop={0} $indent={1237} $fill="#ffccd5"><Fit w={402}>Constitution</Fit></Banner>
          <Banner $margin="36px 0 46px 372px" $w={2130} $h={144} $drop={6} $indent={872} $fill="#e8ffcc"><Fit w={383}>Main Points</Fit></Banner>
          <Lines rows={points} />
          <Heading><Fit w={323}>Amendment 13</Fit></Heading>
          <Lines rows={amendment13} />
          <Heading><Fit w={323}>Amendment 14</Fit></Heading>
          <Lines rows={amendment14} />
        </Window>
      </Workspace>

      <DockArea>
        <Glow $x={276} $w={56} $h={12} $round={10} $fill="#efc5bd" />
        <Glow $x={481} $w={40} $h={5} $round={6} $fill="#e8b070" />
        <Glow $x={2087} $w={96} $h={9} $round={8} $fill="#cf5f4c" />
        <Glow $x={2489} $w={326} $h={62} $fill="linear-gradient(180deg, #4e5434 0, #7d8450 40%, #b1bc6c 100%)" />
        <Dock>
          {apps.map(([Icon, running], i) => <DockItem key={i} $running={running}><Icon /></DockItem>)}
          <DockDivider />
          {shelf.map((Icon, i) => <DockItem key={i}><Icon /></DockItem>)}
        </Dock>
      </DockArea>
    </Desktop>
  );
}
